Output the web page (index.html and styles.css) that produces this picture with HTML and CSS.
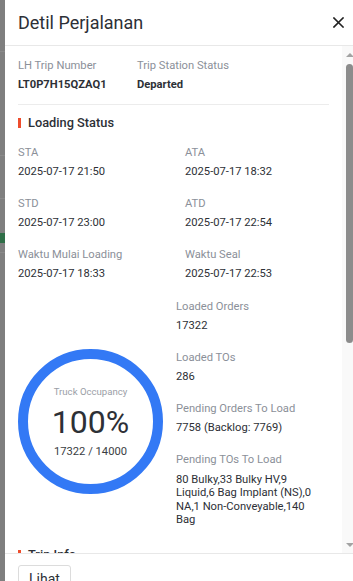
FILE: index.html
```html
<!DOCTYPE html>
<html lang="id">
<head>
<meta charset="utf-8">
<title>Detil Perjalanan</title>
<link rel="stylesheet" href="styles.css">
</head>
<body>
<div class="page">
  <div class="backdrop"></div>
  <aside class="drawer">
    <header class="drawer-head">
      <h1 class="title">Detil Perjalanan</h1>
      <button class="close" aria-label="Tutup">
        <svg width="11" height="11" viewBox="0 0 11 11"><path d="M1 1L10 10M10 1L1 10" stroke="#222" stroke-width="1.6" stroke-linecap="square"/></svg>
      </button>
    </header>
    <div class="drawer-body">
      <div class="content">
        <div class="trip-row">
          <div class="field trip-col">
            <div class="label">LH Trip Number</div>
            <div class="value strong">LT0P7H15QZAQ1</div>
          </div>
          <div class="field">
            <div class="label">Trip Station Status</div>
            <div class="value strong">Departed</div>
          </div>
        </div>
        <div class="divider"></div>

        <h2 class="section-title">Loading Status</h2>
        <div class="grid2">
          <div class="field row-field"><div class="label">STA</div><div class="value">2025-07-17 21:50</div></div>
          <div class="field row-field"><div class="label">ATA</div><div class="value">2025-07-17 18:32</div></div>
          <div class="field row-field"><div class="label">STD</div><div class="value">2025-07-17 23:00</div></div>
          <div class="field row-field"><div class="label">ATD</div><div class="value">2025-07-17 22:54</div></div>
          <div class="field row-field"><div class="label">Waktu Mulai Loading</div><div class="value">2025-07-17 18:33</div></div>
          <div class="field row-field"><div class="label">Waktu Seal</div><div class="value">2025-07-17 22:53</div></div>
        </div>

        <div class="stats">
          <div class="gauge">
            <svg class="ring" width="145" height="145" viewBox="0 0 145 145">
              <circle cx="72.5" cy="72.5" r="67.5" fill="none" stroke="#3379f5" stroke-width="10"/>
            </svg>
            <div class="gauge-text">
              <div class="gauge-label">Truck Occupancy</div>
              <div class="gauge-pct">100%</div>
              <div class="gauge-sub">17322 / 14000</div>
            </div>
          </div>
          <div class="stat-list">
            <div class="field row-field"><div class="label">Loaded Orders</div><div class="value">17322</div></div>
            <div class="field row-field"><div class="label">Loaded TOs</div><div class="value">286</div></div>
            <div class="field row-field"><div class="label">Pending Orders To Load</div><div class="value">7758 (Backlog: 7769)</div></div>
            <div class="field row-field"><div class="label">Pending TOs To Load</div><div class="value wrap">80 Bulky,33 Bulky HV,9 Liquid,6 Bag Implant (NS),0 NA,1 Non-Conveyable,140 Bag</div></div>
          </div>
        </div>

        <h2 class="section-title tight">Trip Info</h2>
      </div>
      <div class="scrollbar">
        <div class="sb-btn"><span class="arrow-up"></span></div>
        <div class="sb-track"><div class="sb-thumb"></div></div>
        <div class="sb-btn"><span class="arrow-down"></span></div>
      </div>
    </div>
    <footer class="drawer-foot">
      <button class="btn">Lihat</button>
    </footer>
  </aside>
</div>
</body>
</html>
```
FILE: styles.css
```css
* { box-sizing: border-box; }
html, body {
  margin: 0;
  height: 100%;
  overflow: hidden;
}
body {
  font-family: Roboto, "Noto Sans", Arial, sans-serif;
  color: #333;
  background: #7f7f7f;
}
.page {
  display: flex;
  height: 581px;
}
.backdrop {
  width: 5px;
  flex: none;
  background:
    linear-gradient(to bottom,
      #7f7f7f 0, #7f7f7f 51px, #8a8a8a 51px, #8a8a8a 52px,
      #7f7f7f 52px, #7f7f7f 155px, #8a8a8a 155px, #8a8a8a 156px,
      #7f7f7f 156px, #7f7f7f 198px, #8a8a8a 198px, #8a8a8a 199px,
      #7f7f7f 199px, #7f7f7f 233px, #2f6e47 233px, #2f6e47 243px,
      #7f7f7f 243px, #7f7f7f 252px, #8a8a8a 252px, #8a8a8a 253px,
      #7f7f7f 253px);
}
.drawer {
  flex: 1;
  display: flex;
  flex-direction: column;
  background: #fff;
  min-width: 0;
}
.drawer-head {
  height: 46px;
  flex: none;
  display: flex;
  align-items: center;
  justify-content: space-between;
  padding: 0 9px 0 13px;
  border-bottom: 1px solid #e8e8e8;
}
.title {
  margin: 0;
  font-size: 18px;
  font-weight: 400;
  line-height: 24px;
  color: #2d3036;
}
.close {
  border: 0;
  background: none;
  padding: 0;
  width: 12px;
  height: 12px;
  display: flex;
  align-items: center;
  justify-content: center;
}
.drawer-body {
  flex: 1;
  min-height: 0;
  display: flex;
}
.content {
  flex: 1;
  min-width: 0;
  overflow: hidden;
  padding: 13px 13px 0 13px;
}
.trip-row {
  display: flex;
}
.trip-col {
  width: 119px;
}
.label {
  font-size: 11.2px;
  line-height: 14px;
  color: #8b9099;
}
.value {
  margin-top: 5px;
  font-size: 11.2px;
  line-height: 14px;
  color: #2d3036;
}
.value.strong {
  font-weight: 700;
}
.value.wrap {
  max-width: 142px;
  margin-top: 6px;
  line-height: 13.4px;
}
.divider {
  height: 1px;
  background: #ececec;
  margin-top: 12px;
}
.section-title {
  display: flex;
  align-items: center;
  margin: 8px 0 0;
  font-size: 12.8px;
  font-weight: 500;
  line-height: 20px;
  color: #2d3036;
}
.section-title.tight {
  margin-top: 0;
}
.section-title::before {
  content: "";
  width: 3px;
  height: 10px;
  background: #ee4d2d;
  margin-right: 7px;
}
.grid2 {
  display: grid;
  grid-template-columns: 167px 1fr;
  margin-top: 13px;
}
.row-field {
  margin-bottom: 18px;
}
.stats {
  display: grid;
  grid-template-columns: 158px 1fr;
  align-items: center;
}
.stat-list {
  padding-top: 1px;
}
.gauge {
  display: grid;
  width: 145px;
  height: 145px;
  place-items: center;
}
.ring, .gauge-text {
  grid-area: 1 / 1;
}
.gauge-text {
  text-align: center;
}
.gauge-label {
  font-size: 9.6px;
  line-height: 14px;
  color: #9a9ea6;
}
.gauge-pct {
  margin-top: 4px;
  font-size: 32px;
  line-height: 38px;
  color: #2d3036;
}
.gauge-sub {
  margin-top: 4px;
  font-size: 11.2px;
  line-height: 14px;
  color: #3a3d42;
}
.scrollbar {
  width: 11px;
  flex: none;
  display: flex;
  flex-direction: column;
  background: #f9f9f9;
}
.sb-btn {
  height: 17px;
  flex: none;
  display: flex;
  align-items: center;
  justify-content: center;
  padding-left: 4px;
}
.arrow-up, .arrow-down {
  width: 0;
  height: 0;
  border-left: 4px solid transparent;
  border-right: 4px solid transparent;
}
.arrow-up { border-bottom: 4px solid #a3a3a3; }
.arrow-down { border-top: 4px solid #a3a3a3; }
.sb-track {
  flex: 1;
  padding-top: 1px;
}
.sb-thumb {
  margin-left: 4px;
  width: 7px;
  height: 279px;
  border-radius: 4px;
  background: #8c8c8c;
}
.drawer-foot {
  height: 28px;
  flex: none;
  border-top: 1px solid #e8e8e8;
  padding: 11px 13px 0;
}
.btn {
  height: 28px;
  padding: 0 10px;
  border: 1px solid #dcdcdc;
  border-radius: 3px;
  background: #fff;
  font-family: Roboto, "Noto Sans", Arial, sans-serif;
  font-size: 14px;
  color: #2d3036;
  line-height: 26px;
}
```
